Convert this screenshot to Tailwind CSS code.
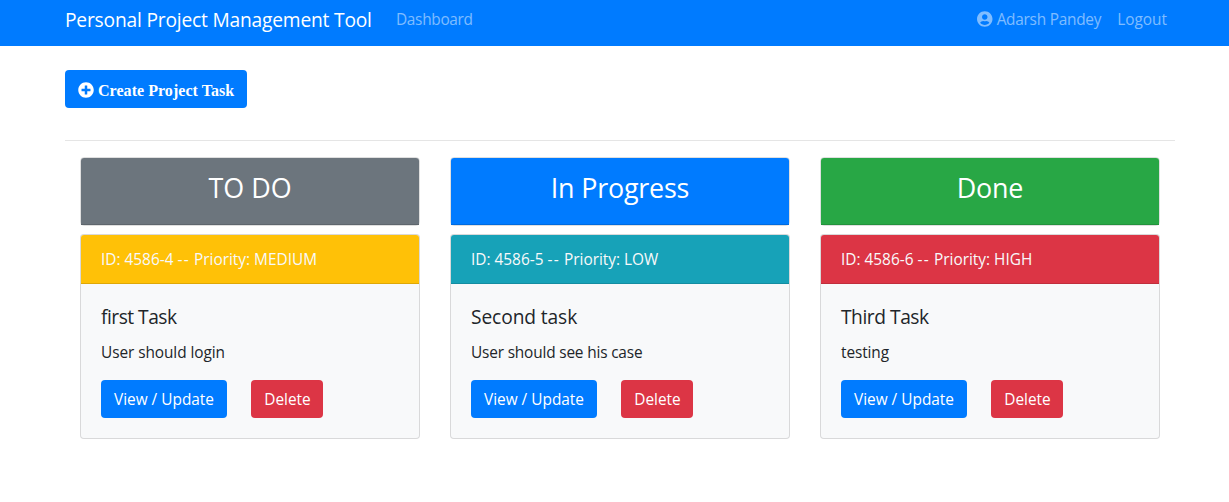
<!DOCTYPE html>
<html lang="en">
<head>
<meta charset="utf-8">
<title>Personal Project Management Tool</title>
<script src="https://cdn.jsdelivr.net/npm/@tailwindcss/browser@4"></script>
</head>
<body class="bg-white font-['Open_Sans','Noto_Sans',sans-serif] text-[15.4px] leading-6 text-[#212529]">
<nav class="h-[46px] bg-[#007bff] pt-[5px]">
  <div class="ml-[65px] flex h-[30px] w-[1102px] items-center whitespace-nowrap text-white/50">
    <a class="w-[331px] text-[19.2px] leading-[30px] tracking-[-0.19px] text-white">Personal Project Management Tool</a>
    <a class="tracking-[-0.3px]">Dashboard</a>
    <a class="ml-auto flex items-center tracking-[-0.25px]">
      <svg class="mr-1 mb-0.5 h-4 w-[15.5px]" viewBox="0 0 496 512" fill="currentColor"><path d="M248 8C111 8 0 119 0 256s111 248 248 248 248-111 248-248S385 8 248 8zm0 96c48.600 0 88 39.400 88 88s-39.400 88-88 88-88-39.400-88-88 39.400-88 88-88zm0 344c-58.700 0-111.300-26.600-146.500-68.200 18.800-35.400 55.600-59.800 98.500-59.800 2.400 0 4.800.4 7.100 1.100 13 4.200 26.600 6.900 40.900 6.900 14.300 0 28-2.700 40.900-6.900 2.300-.7 4.700-1.100 7.100-1.100 42.900 0 79.700 24.400 98.500 59.800C359.300 421.400 306.700 448 248 448z"/></svg>
      Adarsh Pandey</a>
    <a class="ml-4">Logout</a>
  </div>
</nav>
<main class="ml-[65px] w-[1110px] pt-6">
  <button class="flex h-[38px] w-[182px] items-center rounded bg-[#007bff] pl-[13px] font-['Liberation_Serif',serif] text-base font-bold tracking-[0.04px] whitespace-nowrap text-white">
    <svg class="mt-0.5 mr-1 h-4 w-4" viewBox="0 0 512 512" fill="currentColor"><path d="M256 8C119 8 8 119 8 256s111 248 248 248 248-111 248-248S393 8 256 8zm144 276c0 6.600-5.400 12-12 12h-92v92c0 6.600-5.400 12-12 12h-56c-6.600 0-12-5.400-12-12v-92h-92c-6.600 0-12-5.400-12-12v-56c0-6.600 5.400-12 12-12h92v-92c0-6.600 5.400-12 12-12h56c6.600 0 12 5.400 12 12v92h92c6.600 0 12 5.400 12 12v56z"/></svg>
    <span class="pt-1">Create Project Task</span>
  </button>
  <hr class="mt-8 border-t border-black/10">
  <div class="mt-4 grid grid-cols-3 gap-[30px] px-[15px]">
    <section>
      <div class="h-[69px] rounded border border-black/[.125]">
        <h3 class="h-full rounded-t-[3px] border-b border-black/[.125] bg-[#6c757d] pt-[13px] text-center text-[26.9px] leading-[34px] text-white">TO DO</h3>
      </div>
      <article class="mt-2 h-[205px] rounded border border-black/[.125] bg-[#f8f9fa]">
        <div class="h-[49px] rounded-t-[3px] border-b border-black/[.125] bg-[#ffc107] px-5 pt-[13px] text-[#f8f9fa]">ID: 4586-4 <span class="tracking-[1.3px]">--</span> Priority: MEDIUM</div>
        <div class="px-5 pt-[21px]">
          <h5 class="text-[19.2px] leading-6 tracking-[-0.5px]">first Task</h5>
          <p class="mt-3 tracking-[-0.07px]">User should login</p>
          <div class="mt-[15px] flex gap-6 text-white">
            <button class="h-[38px] w-[126px] rounded bg-[#007bff] pt-px">View / Update</button>
            <button class="h-[38px] w-[72px] rounded bg-[#dc3545] pt-px pl-px">Delete</button>
          </div>
        </div>
      </article>
    </section>
    <section>
      <div class="h-[69px] rounded border border-black/[.125]">
        <h3 class="h-full rounded-t-[3px] border-b border-black/[.125] bg-[#007bff] pt-[13px] text-center text-[26.9px] leading-[34px] tracking-[-0.2px] text-white">In Progress</h3>
      </div>
      <article class="mt-2 h-[205px] rounded border border-black/[.125] bg-[#f8f9fa]">
        <div class="h-[49px] rounded-t-[3px] border-b border-black/[.125] bg-[#17a2b8] px-5 pt-[13px] text-[#f8f9fa]">ID: 4586-5 <span class="tracking-[1.3px]">--</span> Priority: LOW</div>
        <div class="px-5 pt-[21px]">
          <h5 class="text-[19.2px] leading-6 tracking-[-0.1px]">Second task</h5>
          <p class="mt-3 tracking-[-0.17px]">User should see his case</p>
          <div class="mt-[15px] flex gap-6 text-white">
            <button class="h-[38px] w-[126px] rounded bg-[#007bff] pt-px">View / Update</button>
            <button class="h-[38px] w-[72px] rounded bg-[#dc3545] pt-px pl-px">Delete</button>
          </div>
        </div>
      </article>
    </section>
    <section>
      <div class="h-[69px] rounded border border-black/[.125]">
        <h3 class="h-full rounded-t-[3px] border-b border-black/[.125] bg-[#28a745] pt-[13px] text-center text-[26.9px] leading-[34px] tracking-[-0.2px] text-white">Done</h3>
      </div>
      <article class="mt-2 h-[205px] rounded border border-black/[.125] bg-[#f8f9fa]">
        <div class="h-[49px] rounded-t-[3px] border-b border-black/[.125] bg-[#dc3545] px-5 pt-[13px] text-[#f8f9fa]">ID: 4586-6 <span class="tracking-[1.3px]">--</span> Priority: HIGH</div>
        <div class="px-5 pt-[21px]">
          <h5 class="text-[19.2px] leading-6 tracking-[-0.45px]">Third Task</h5>
          <p class="mt-3 tracking-[-0.1px]">testing</p>
          <div class="mt-[15px] flex gap-6 text-white">
            <button class="h-[38px] w-[126px] rounded bg-[#007bff] pt-px">View / Update</button>
            <button class="h-[38px] w-[72px] rounded bg-[#dc3545] pt-px pl-px">Delete</button>
          </div>
        </div>
      </article>
    </section>
  </div>
</main>
</body>
</html>
